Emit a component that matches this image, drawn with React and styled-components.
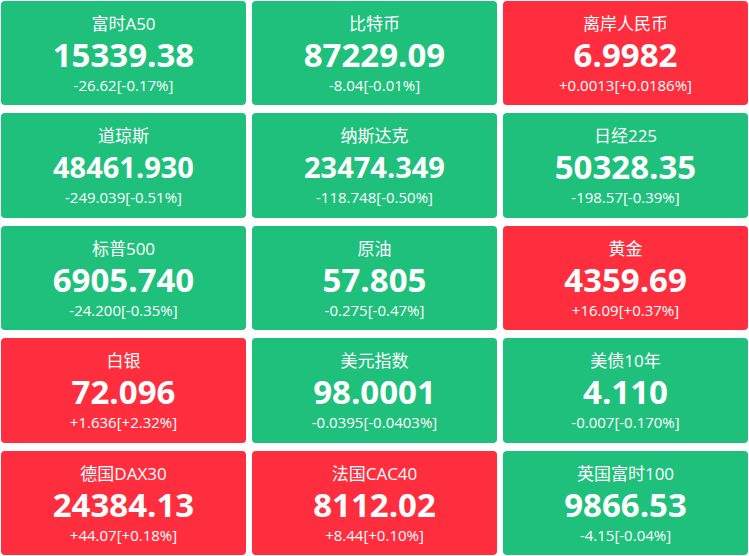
import React from "react";
import styled, { createGlobalStyle } from "styled-components";

const Global = createGlobalStyle`
  html, body { margin: 0; padding: 0; background: #ffffff; }
  body { font-family: "Open Sans", "Noto Sans CJK SC", sans-serif; }
`;

const Grid = styled.div`
  box-sizing: border-box;
  width: 749px;
  height: 556px;
  padding: 1px;
  display: grid;
  grid-template-columns: repeat(3, 245px);
  grid-template-rows: repeat(5, 1fr);
  column-gap: 6px;
  row-gap: 8px;
`;

const Card = styled.div`
  border-radius: 4px;
  background: ${(p) => (p.$up ? "#fe2e3e" : "#1ec07b")};
  color: #ffffff;
  display: flex;
  flex-direction: column;
  align-items: center;
  padding-top: 11px;
  box-sizing: border-box;
`;

const Title = styled.div`
  font-size: 17px;
  line-height: 24px;
  font-weight: 400;
  font-family: "Open Sans", "Noto Sans CJK SC", sans-serif;
`;

const Value = styled.div`
  font-size: ${(p) => (p.$long ? "29px" : "33px")};
  line-height: 38px;
  font-weight: 700;
  font-family: "Open Sans", sans-serif;
`;

const Change = styled.div`
  font-size: 15px;
  line-height: 22px;
  font-weight: 400;
  font-family: "Open Sans", sans-serif;
`;

const data = [
  ["富时A50", "15339.38", "-26.62[-0.17%]", false],
  ["比特币", "87229.09", "-8.04[-0.01%]", false],
  ["离岸人民币", "6.9982", "+0.0013[+0.0186%]", true],
  ["道琼斯", "48461.930", "-249.039[-0.51%]", false],
  ["纳斯达克", "23474.349", "-118.748[-0.50%]", false],
  ["日经225", "50328.35", "-198.57[-0.39%]", false],
  ["标普500", "6905.740", "-24.200[-0.35%]", false],
  ["原油", "57.805", "-0.275[-0.47%]", false],
  ["黄金", "4359.69", "+16.09[+0.37%]", true],
  ["白银", "72.096", "+1.636[+2.32%]", true],
  ["美元指数", "98.0001", "-0.0395[-0.0403%]", false],
  ["美债10年", "4.110", "-0.007[-0.170%]", false],
  ["德国DAX30", "24384.13", "+44.07[+0.18%]", true],
  ["法国CAC40", "8112.02", "+8.44[+0.10%]", true],
  ["英国富时100", "9866.53", "-4.15[-0.04%]", false],
];

export default function App() {
  return (
    <>
      <Global />
      <Grid>
        {data.map(([t, v, c, up]) => (
          <Card key={t} $up={up}>
            <Title>{t}</Title>
            <Value $long={v.length >= 9}>{v}</Value>
            <Change>{c}</Change>
          </Card>
        ))}
      </Grid>
    </>
  );
}
